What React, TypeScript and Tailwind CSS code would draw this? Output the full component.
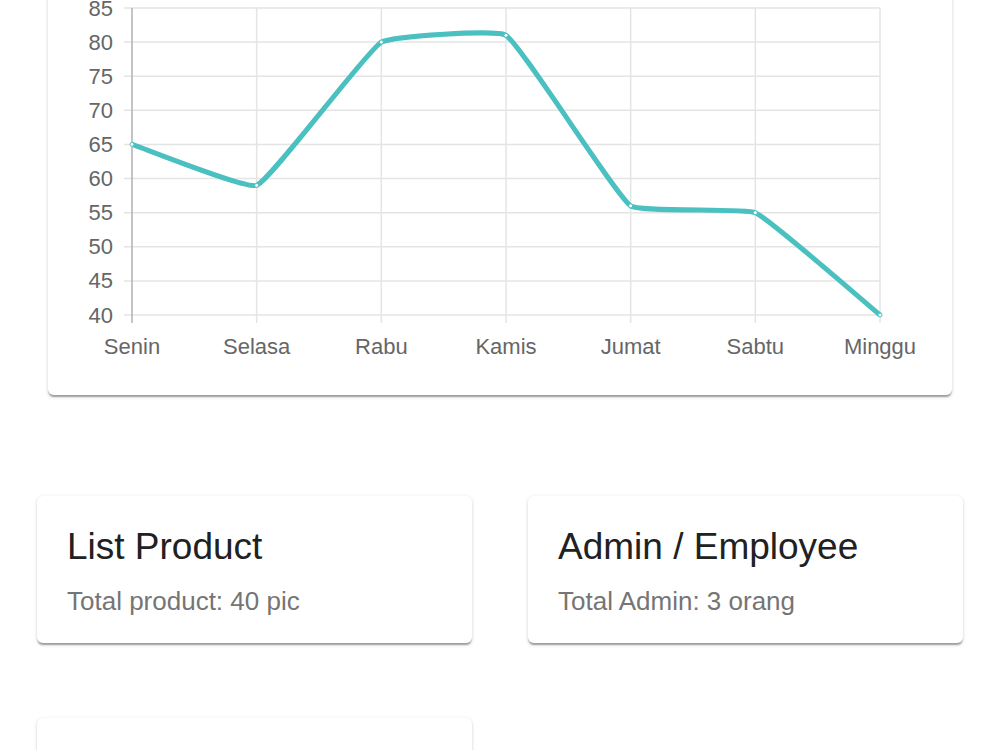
import React from "react";

const values = [65, 59, 80, 81, 56, 55, 40];
const labels = ["Senin", "Selasa", "Rabu", "Kamis", "Jumat", "Sabtu", "Minggu"];
const X0 = 132;
const X1 = 880;
const Y85 = 8;
const Y40 = 315;
const step = (X1 - X0) / 6;
const px = (i: number) => X0 + i * step;
const py = (v: number) => Y40 - ((v - 40) * (Y40 - Y85)) / 45;

function buildPath() {
  const pts = values.map((v, i) => ({ x: px(i), y: py(v) }));
  const t = 0.1;
  const ctrl = pts.map((p, i) => {
    const prev = pts[i - 1] || p;
    const next = pts[i + 1] || p;
    const d01 = Math.hypot(p.x - prev.x, p.y - prev.y);
    const d12 = Math.hypot(next.x - p.x, next.y - p.y);
    let s01 = d01 / (d01 + d12);
    let s12 = d12 / (d01 + d12);
    if (isNaN(s01)) s01 = 0;
    if (isNaN(s12)) s12 = 0;
    const fa = t * s01;
    const fb = t * s12;
    return {
      prev: { x: p.x - fa * (next.x - prev.x), y: p.y - fa * (next.y - prev.y) },
      next: { x: p.x + fb * (next.x - prev.x), y: p.y + fb * (next.y - prev.y) },
    };
  });
  let d = `M ${pts[0].x} ${pts[0].y}`;
  for (let i = 1; i < pts.length; i++) {
    const c1 = ctrl[i - 1].next;
    const c2 = ctrl[i].prev;
    d += ` C ${c1.x} ${c1.y} ${c2.x} ${c2.y} ${pts[i].x} ${pts[i].y}`;
  }
  return { d, pts };
}

function Chart() {
  const { d, pts } = buildPath();
  const yTicks = [85, 80, 75, 70, 65, 60, 55, 50, 45, 40];
  return (
    <svg width={904} height={435} viewBox="48 -40 904 435" className="block">
      {yTicks.map((v) => (
        <line key={v} x1={X0 - 8} x2={X1} y1={py(v)} y2={py(v)} stroke="#e4e4e4" strokeWidth={1.5} />
      ))}
      {labels.map((l, i) => (
        <line
          key={l}
          x1={px(i)}
          x2={px(i)}
          y1={Y85}
          y2={Y40 + 8}
          stroke={i === 0 ? "#b0b0b0" : "#e4e4e4"}
          strokeWidth={1.5}
        />
      ))}
      {yTicks.map((v) => (
        <text
          key={"t" + v}
          x={113}
          y={py(v)}
          textAnchor="end"
          dominantBaseline="central"
          fill="#666666"
          fontSize={22}
          fontFamily='"Liberation Sans", Arial, sans-serif'
        >
          {v}
        </text>
      ))}
      {labels.map((l, i) => (
        <text
          key={"x" + l}
          x={px(i)}
          y={354}
          textAnchor="middle"
          fill="#666666"
          fontSize={22}
          fontFamily='"Liberation Sans", Arial, sans-serif'
        >
          {l}
        </text>
      ))}
      <path d={d} fill="none" stroke="#4bc0c0" strokeWidth={5} strokeLinejoin="round" />
      {pts.map((p, i) => (
        <circle key={i} cx={p.x} cy={p.y} r={2} fill="#ffffff" stroke="#4bc0c0" strokeWidth={1} />
      ))}
    </svg>
  );
}

const cardShadow =
  "shadow-[0_3px_1.5px_-1.5px_rgba(0,0,0,0.2),0_1.5px_1.5px_0_rgba(0,0,0,0.14),0_1.5px_4.5px_0_rgba(0,0,0,0.12)]";

function InfoCard({ title, sub }: { title: string; sub: string }) {
  return (
    <div className={`bg-white rounded-[6px] h-[147px] px-[30px] pt-[29px] ${cardShadow}`}>
      <div
        className="text-[37px] leading-[44px] text-[#212121]"
        style={{ fontFamily: '"Liberation Sans", Arial, sans-serif' }}
      >
        {title}
      </div>
      <div
        className="mt-[17px] text-[26px] leading-[30px] text-[#757575]"
        style={{ fontFamily: '"Liberation Sans", Arial, sans-serif' }}
      >
        {sub}
      </div>
    </div>
  );
}

export default function App() {
  return (
    <div className="w-[1000px] h-[750px] overflow-hidden bg-white">
      <div className="px-[48px] -mt-[40px]">
        <div className={`bg-white rounded-[6px] ${cardShadow}`}>
          <Chart />
        </div>
      </div>
      <div className="mx-[37px] mt-[101px] grid grid-cols-2 gap-x-[56px] gap-y-[75px]">
        <InfoCard title="List Product" sub="Total product: 40 pic" />
        <InfoCard title="Admin / Employee" sub="Total Admin: 3 orang" />
        <div className={`bg-white rounded-[6px] h-[147px] ${cardShadow}`} />
      </div>
    </div>
  );
}
